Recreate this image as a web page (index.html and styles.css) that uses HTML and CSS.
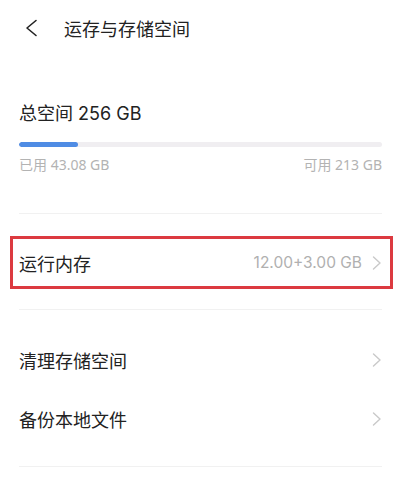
FILE: index.html
```html
<!DOCTYPE html>
<html>

<head>
    <title>运存与存储空间</title>
    <link rel="stylesheet" href="styles.css">
</head>

<body>
    <div class="header">
        <svg class="back" width="14" height="18" viewBox="0 0 14 18">
            <path d="M12 1.5 L3 9 L12 16.5" fill="none" stroke="#222" stroke-width="1.6" stroke-linecap="round" stroke-linejoin="round" />
        </svg>
        <h1>运存与存储空间</h1>
    </div>

    <div class="summary">
        <div class="total">总空间 256 GB</div>
        <div class="bar">
            <div class="used" style="width: 16.3%"></div>
        </div>
        <div class="legend">
            <span>已用 43.08 GB</span>
            <span>可用 213 GB</span>
        </div>
    </div>

    <div class="divider"></div>

    <div class="highlight">
        <div class="row">
            <span class="label">运行内存</span>
            <span class="value">12.00+3.00 GB</span>
            <svg class="arrow" width="10" height="14" viewBox="0 0 10 14">
                <path d="M1.5 1 L8 7 L1.5 13" fill="none" stroke="#c9c9c9" stroke-width="1.4" stroke-linecap="round" stroke-linejoin="round" />
            </svg>
        </div>
    </div>

    <div class="divider second"></div>

    <div class="list">
        <div class="row">
            <span class="label">清理存储空间</span>
            <svg class="arrow" width="10" height="14" viewBox="0 0 10 14">
                <path d="M1.5 1 L8 7 L1.5 13" fill="none" stroke="#c9c9c9" stroke-width="1.4" stroke-linecap="round" stroke-linejoin="round" />
            </svg>
        </div>
        <div class="row">
            <span class="label">备份本地文件</span>
            <svg class="arrow" width="10" height="14" viewBox="0 0 10 14">
                <path d="M1.5 1 L8 7 L1.5 13" fill="none" stroke="#c9c9c9" stroke-width="1.4" stroke-linecap="round" stroke-linejoin="round" />
            </svg>
        </div>
    </div>

    <div class="divider last"></div>
</body>

</html>
```

FILE: styles.css
```css
body {
    margin: 0;
    background-color: #fff;
    color: #222;
    font-family: "Noto Sans", "Noto Sans CJK SC", sans-serif;
}

.header {
    height: 56px;
    display: flex;
    align-items: center;
    padding-left: 24px;
}

.header h1 {
    margin: 0 0 0 26px;
    font-size: 18px;
    font-weight: 400;
}

.back {
    display: block;
}

.summary {
    padding: 46px 27px 0 19px;
}

.total {
    font-family: Inter, "Noto Sans CJK SC", sans-serif;
    font-size: 18px;
    line-height: 24px;
}

.bar {
    margin-top: 16px;
    height: 5px;
    border-radius: 3px;
    background-color: #f0eef1;
    overflow: hidden;
}

.used {
    height: 100%;
    border-radius: 3px;
    background-color: #4f8ce4;
}

.legend {
    margin-top: 8px;
    display: flex;
    justify-content: space-between;
    font-size: 14px;
    line-height: 20px;
    color: #b3b3b3;
}

.divider {
    margin: 38px 27px 0 19px;
    height: 1px;
    background-color: #f1f1f1;
}

.highlight {
    margin: 22px 16px 0 10px;
    border: 3px solid #dc3a40;
    padding: 0 8px 0 6px;
}

.highlight .row {
    height: 47px;
}

.row {
    display: flex;
    align-items: center;
    height: 59px;
}

.label {
    flex: 1;
    font-size: 18px;
}

.value {
    font-family: Inter, "Noto Sans CJK SC", sans-serif;
    font-size: 15.5px;
    color: #b0b0b0;
    margin-right: 10px;
}

.arrow {
    display: block;
}

.divider.second {
    margin-top: 20px;
}

.list {
    margin-top: 20px;
    padding: 0 27px 0 19px;
}

.divider.last {
    margin-top: 18px;
}
```
